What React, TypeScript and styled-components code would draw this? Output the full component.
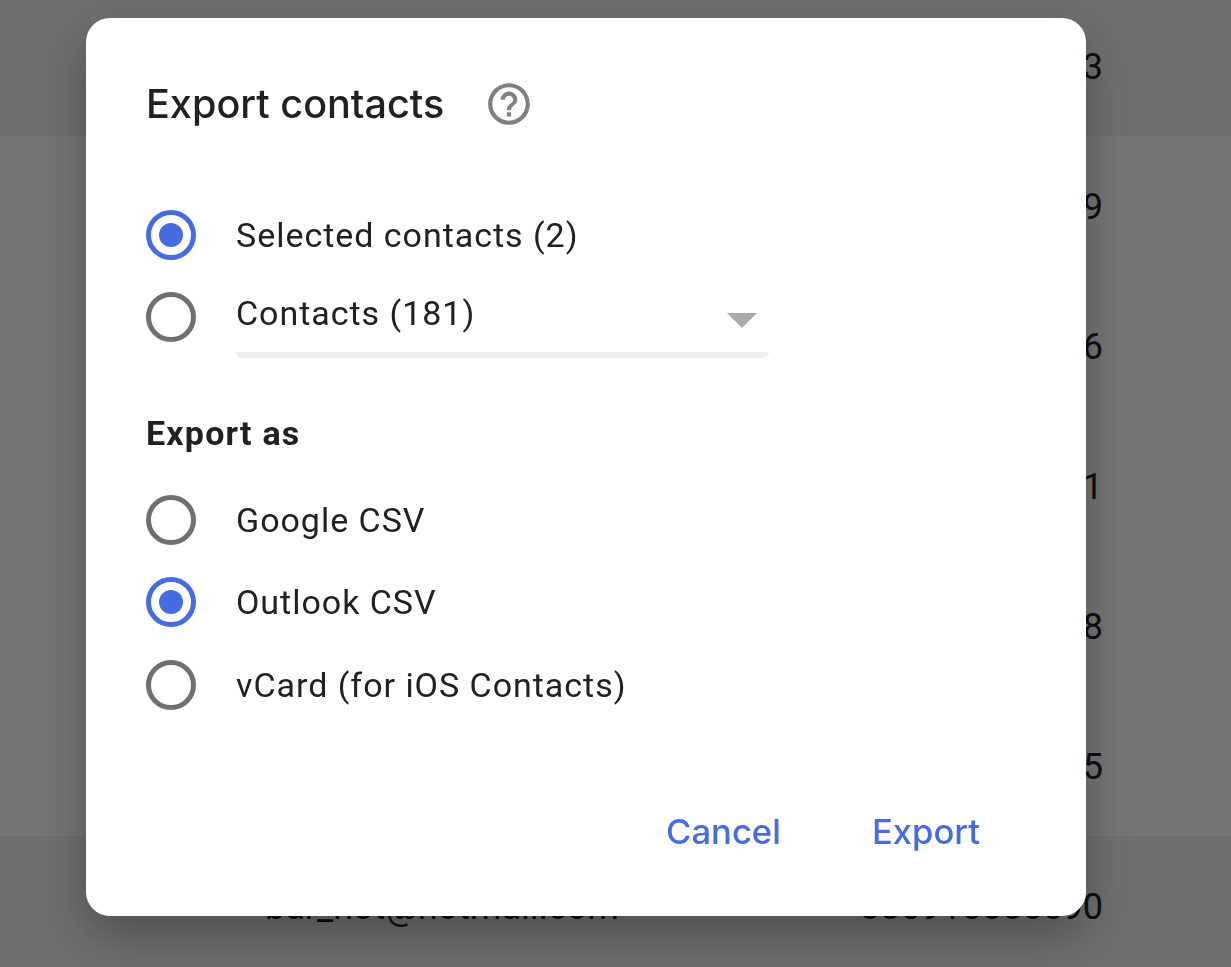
import React from "react";
import styled, { createGlobalStyle } from "styled-components";

const BLUE = "#466ce2";

const GlobalStyle = createGlobalStyle`
  html, body {
    margin: 0;
    height: 100%;
    overflow: hidden;
    background: #fff;
    font-family: Roboto, "Liberation Sans", sans-serif;
  }
`;

const contacts = [
  { email: "", phone: "0913", tinted: true },
  { email: "", phone: "0919", tinted: false },
  { email: "", phone: "0916", tinted: false },
  { email: "", phone: "0911", tinted: false },
  { email: "", phone: "0918", tinted: false },
  { email: "", phone: "0915", tinted: false },
  { email: "bar_hot@hotmail.com", phone: "330915555590", tinted: true },
];

const formats = [
  { label: "Google CSV", checked: false },
  { label: "Outlook CSV", checked: true },
  { label: "vCard (for iOS Contacts)", checked: false },
];

export default function App() {
  return (
    <>
      <GlobalStyle />
      <ContactList>
        {contacts.map((contact) => (
          <ContactRow key={contact.phone} $tinted={contact.tinted}>
            <Email>{contact.email}</Email>
            <Phone>{contact.phone}</Phone>
          </ContactRow>
        ))}
      </ContactList>
      <Scrim />
      <Dialog>
        <Header>
          <Title>Export contacts</Title>
          <HelpIcon viewBox="0 0 24 24">
            <path d="M11 18h2v-2h-2v2zm1-16C6.48 2 2 6.48 2 12s4.48 10 10 10 10-4.48 10-10S17.52 2 12 2zm0 18c-4.41 0-8-3.59-8-8s3.59-8 8-8 8 3.59 8 8-3.59 8-8 8zm0-14c-2.21 0-4 1.79-4 4h2c0-1.1.9-2 2-2s2 .9 2 2c0 2-3 1.75-3 5h2c0-2.25 3-2.5 3-5 0-2.21-1.79-4-4-4z" />
          </HelpIcon>
        </Header>

        <Scope>
          <OptionRow>
            <Radio $checked />
            <OptionLabel>Selected contacts (2)</OptionLabel>
          </OptionRow>
          <OptionRow>
            <Radio />
            <Select>
              <OptionLabel>Contacts (181)</OptionLabel>
              <Caret />
            </Select>
          </OptionRow>
        </Scope>

        <SectionLabel>Export as</SectionLabel>

        {formats.map((format) => (
          <FormatRow key={format.label}>
            <Radio $checked={format.checked} />
            <OptionLabel>{format.label}</OptionLabel>
          </FormatRow>
        ))}

        <Footer>
          <TextButton>Cancel</TextButton>
          <TextButton>Export</TextButton>
        </Footer>
      </Dialog>
    </>
  );
}

const ContactList = styled.div`
  margin-top: -4px;
  height: 971px;
  overflow: hidden;
`;

const ContactRow = styled.div<{ $tinted: boolean }>`
  height: 140px;
  display: flex;
  align-items: center;
  justify-content: space-between;
  padding: 1px 128px 0 265px;
  box-sizing: border-box;
  font-size: 36px;
  color: #202124;
  background: ${(p) => (p.$tinted ? "#f1f1f1" : "#fff")};
`;

const Email = styled.span``;

const Phone = styled.span``;

const Scrim = styled.div`
  position: fixed;
  inset: 0;
  background: rgba(0, 0, 0, 0.54);
`;

const Dialog = styled.div`
  position: fixed;
  left: 86px;
  top: 18px;
  width: 1000px;
  height: 898px;
  box-sizing: border-box;
  padding: 62px 106px 0 60px;
  background: #fff;
  border-radius: 24px;
  box-shadow: 0 20px 50px 0 rgba(0, 0, 0, 0.3);
`;

const Header = styled.div`
  display: flex;
  align-items: center;
  height: 48px;
`;

const Title = styled.h1`
  margin: 0;
  width: 297px;
  white-space: nowrap;
  font-family: Inter, Roboto, sans-serif;
  font-size: 39.6px;
  font-weight: 450;
  color: #202124;
`;

const HelpIcon = styled.svg`
  width: 50px;
  height: 50px;
  margin-left: 41px;
  fill: #808080;
`;

const Scope = styled.div`
  margin-top: 66px;
`;

const OptionRow = styled.div`
  display: flex;
  align-items: center;
  gap: 40px;
  height: 82px;
`;

const FormatRow = styled(OptionRow)`
  height: 82.5px;
`;

const Radio = styled.span<{ $checked?: boolean }>`
  flex: none;
  width: 50px;
  height: 50px;
  box-sizing: border-box;
  display: flex;
  align-items: center;
  justify-content: center;
  border-radius: 50%;
  border: 5px solid ${(p) => (p.$checked ? BLUE : "#6f6f6f")};

  &::after {
    content: "";
    display: ${(p) => (p.$checked ? "block" : "none")};
    width: 24px;
    height: 24px;
    border-radius: 50%;
    background: ${BLUE};
  }
`;

const OptionLabel = styled.span`
  font-size: 34px;
  letter-spacing: 0.97px;
  color: #202124;
  white-space: nowrap;
`;

const Select = styled.div`
  width: 533px;
  height: 82px;
  box-sizing: border-box;
  display: flex;
  align-items: center;
  justify-content: space-between;
  padding: 0 12px 2px 0;
  border-bottom: 6px solid #eeeeee;
  border-radius: 0 0 6px 6px;
`;

const Caret = styled.span`
  width: 0;
  height: 0;
  margin-top: 14px;
  border-left: 15px solid transparent;
  border-right: 15px solid transparent;
  border-top: 15px solid #aaaaaa;
`;

const SectionLabel = styled.div`
  margin-top: 55px;
  margin-bottom: 25.5px;
  height: 40px;
  line-height: 40px;
  font-size: 34px;
  font-weight: 700;
  letter-spacing: 1.2px;
  color: #202124;
`;

const Footer = styled.div`
  display: flex;
  justify-content: flex-end;
  gap: 91px;
  margin-top: 84px;
`;

const TextButton = styled.button`
  border: none;
  background: none;
  padding: 0;
  font-family: Inter, Roboto, sans-serif;
  font-size: 34.6px;
  font-weight: 500;
  color: ${BLUE};
`;
